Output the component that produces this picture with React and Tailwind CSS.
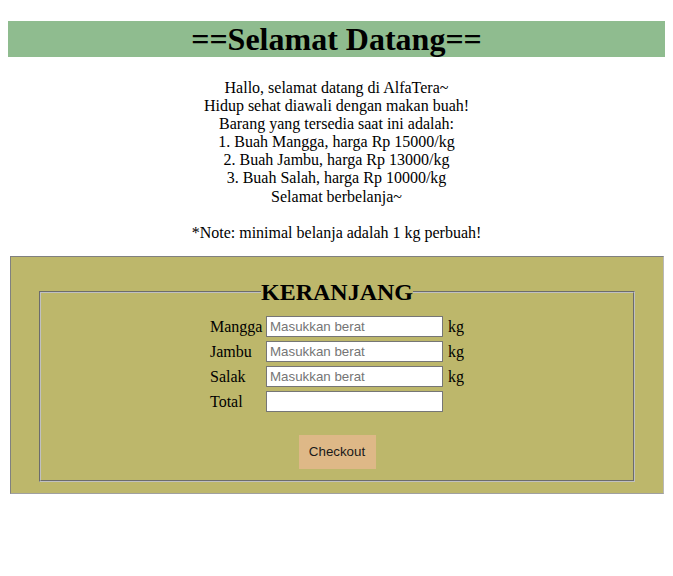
export default function App() {
  const items = [
    { label: "Mangga", unit: "kg" },
    { label: "Jambu", unit: "kg" },
    { label: "Salak", unit: "kg" },
  ];

  return (
    <div className="min-h-screen bg-white text-black font-['Liberation_Serif',serif] pb-10">
      <h1 className="mx-2 mt-[21px] h-[36px] bg-[#8fbc8f] text-center text-[32px] leading-[36px] font-bold">
        ==Selamat Datang==
      </h1>

      <div className="mt-[22px] text-center text-[16px] leading-[18.1px]">
        <p>Hallo, selamat datang di AlfaTera~</p>
        <p>Hidup sehat diawali dengan makan buah!</p>
        <p>Barang yang tersedia saat ini adalah:</p>
        <p>1. Buah Mangga, harga Rp 15000/kg</p>
        <p>2. Buah Jambu, harga Rp 13000/kg</p>
        <p>3. Buah Salah, harga Rp 10000/kg</p>
        <p>Selamat berbelanja~</p>
        <p>&nbsp;</p>
        <p>*Note: minimal belanja adalah 1 kg perbuah!</p>
      </div>

      <div className="ml-[10px] mr-[9px] mt-[14px] h-[238px] bg-[#bdb76b] border border-t-[#808080] border-l-[#808080] border-r-[#b8b8b8] border-b-[#a0a0a0] pt-[22px] px-[28px]">
        <fieldset className="h-[203px] border-2 [border-style:groove] border-[#c0c0c0]">
          <legend className="mx-auto text-[24px] leading-[27px] font-bold">KERANJANG</legend>
          <div className="pt-[10px] flex flex-col items-center">
            <div className="mr-[2px] grid grid-cols-[auto_auto_auto] gap-y-[4px] gap-x-[4px] items-center">
              {items.map((it) => (
                <div key={it.label} className="contents">
                  <span className="pl-[2px] w-[54px] text-[16px] leading-[21px]">{it.label}</span>
                  <input
                    type="text"
                    placeholder="Masukkan berat"
                    className="w-[177px] h-[21px] bg-white border border-[#767676] px-[3px] text-[13.33px] font-['Liberation_Sans',Arial,sans-serif] placeholder:text-[#757575] outline-none"
                  />
                  <span className="pl-[1px] text-[16px] leading-[21px]">{it.unit}</span>
                </div>
              ))}
              <span className="pl-[2px] text-[16px] leading-[21px]">Total</span>
              <input
                type="text"
                className="w-[177px] h-[21px] bg-white border border-[#767676] px-[3px] text-[13.33px] font-['Liberation_Sans',Arial,sans-serif] outline-none"
              />
              <span className="w-[17px]"></span>
            </div>
            <button className="mt-[23px] w-[77px] h-[34px] bg-[#deb887] text-[13.33px] text-[#1a1a1a] font-['Liberation_Sans',Arial,sans-serif]">
              Checkout
            </button>
          </div>
        </fieldset>
      </div>
    </div>
  );
}
